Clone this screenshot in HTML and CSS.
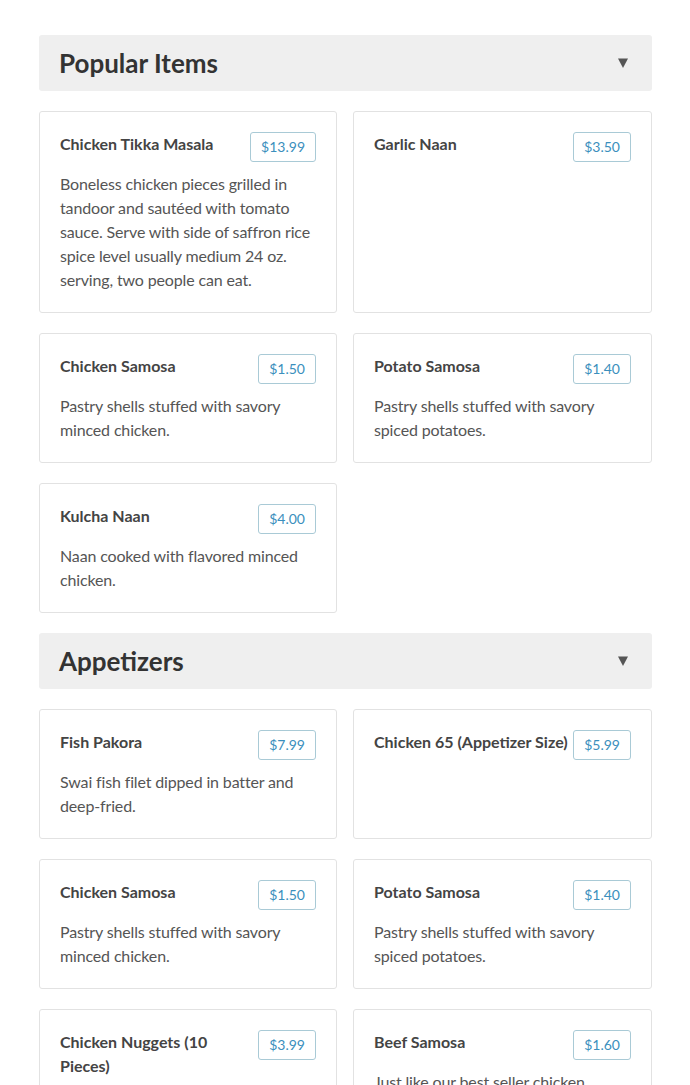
FILE: index.html
```html
<!DOCTYPE html>
<html lang="en">
<head>
<meta charset="utf-8">
<title>Menu</title>
<link rel="stylesheet" href="styles.css">
</head>
<body>
<main class="menu">
  <section class="category">
    <div class="category-header">
      <h2 class="category-title">Popular Items</h2>
      <svg class="caret" width="10" height="10" viewBox="0 0 10 10"><path d="M0 0.5H10L5 10Z"/></svg>
    </div>
    <div class="items">
      <article class="item">
        <div class="item-head"><h3 class="item-name">Chicken Tikka Masala</h3><span class="price">$13.99</span></div>
        <p class="item-desc">Boneless chicken pieces grilled in tandoor and sautéed with tomato sauce. Serve with side of saffron rice spice level usually medium 24 oz. serving, two people can eat.</p>
      </article>
      <article class="item">
        <div class="item-head"><h3 class="item-name">Garlic Naan</h3><span class="price">$3.50</span></div>
      </article>
      <article class="item">
        <div class="item-head"><h3 class="item-name">Chicken Samosa</h3><span class="price">$1.50</span></div>
        <p class="item-desc">Pastry shells stuffed with savory minced chicken.</p>
      </article>
      <article class="item">
        <div class="item-head"><h3 class="item-name">Potato Samosa</h3><span class="price">$1.40</span></div>
        <p class="item-desc">Pastry shells stuffed with savory spiced potatoes.</p>
      </article>
      <article class="item">
        <div class="item-head"><h3 class="item-name">Kulcha Naan</h3><span class="price">$4.00</span></div>
        <p class="item-desc">Naan cooked with flavored minced chicken.</p>
      </article>
    </div>
  </section>
  <section class="category">
    <div class="category-header">
      <h2 class="category-title">Appetizers</h2>
      <svg class="caret" width="10" height="10" viewBox="0 0 10 10"><path d="M0 0.5H10L5 10Z"/></svg>
    </div>
    <div class="items">
      <article class="item">
        <div class="item-head"><h3 class="item-name">Fish Pakora</h3><span class="price">$7.99</span></div>
        <p class="item-desc">Swai fish filet dipped in batter and deep-fried.</p>
      </article>
      <article class="item">
        <div class="item-head"><h3 class="item-name">Chicken 65 (Appetizer Size)</h3><span class="price">$5.99</span></div>
      </article>
      <article class="item">
        <div class="item-head"><h3 class="item-name">Chicken Samosa</h3><span class="price">$1.50</span></div>
        <p class="item-desc">Pastry shells stuffed with savory minced chicken.</p>
      </article>
      <article class="item">
        <div class="item-head"><h3 class="item-name">Potato Samosa</h3><span class="price">$1.40</span></div>
        <p class="item-desc">Pastry shells stuffed with savory spiced potatoes.</p>
      </article>
      <article class="item">
        <div class="item-head"><h3 class="item-name">Chicken Nuggets (10 Pieces)</h3><span class="price">$3.99</span></div>
        <p class="item-desc">Crispy golden chicken nuggets served with dipping sauce.</p>
      </article>
      <article class="item">
        <div class="item-head"><h3 class="item-name">Beef Samosa</h3><span class="price">$1.60</span></div>
        <p class="item-desc">Just like our best seller chicken samosa, stuffed with spiced minced beef.</p>
      </article>
    </div>
  </section>
</main>
</body>
</html>
```
FILE: styles.css
```css
html, body {
  margin: 0;
  padding: 0;
  background: #ffffff;
}
body {
  font-family: "Lato", "Liberation Sans", sans-serif;
  color: #444444;
}
.menu {
  width: 613px;
  padding: 35px 0 0 39px;
}
.category {
  margin-bottom: 20px;
}
.category-header {
  height: 56px;
  box-sizing: border-box;
  background: #efefef;
  border-radius: 3px;
  display: flex;
  align-items: center;
  justify-content: space-between;
  padding: 0 24px 0 20px;
  margin-bottom: 20px;
}
.category-title {
  margin: 0;
  font-size: 26px;
  font-weight: 700;
  color: #333333;
  line-height: 30px;
}
.caret {
  fill: #555555;
  display: block;
}
.items {
  display: grid;
  grid-template-columns: 298px 299px;
  column-gap: 16px;
  row-gap: 20px;
}
.item {
  border: 1px solid #e2e2e2;
  border-radius: 3px;
  padding: 20px;
}
.item-head {
  display: flex;
  align-items: flex-start;
  justify-content: space-between;
}
.item-name {
  margin: 0;
  font-size: 16px;
  font-weight: 700;
  line-height: 24px;
  color: #444444;
}
.price {
  flex-shrink: 0;
  margin-left: 2px;
  border: 1px solid #a9cad6;
  border-radius: 3px;
  padding: 4px 10px;
  font-size: 14px;
  line-height: 20px;
  color: #3b8fbd;
}
.item-desc {
  margin: 10px 0 0;
  font-size: 16px;
  line-height: 24px;
  letter-spacing: -0.15px;
  color: #555555;
}
```
